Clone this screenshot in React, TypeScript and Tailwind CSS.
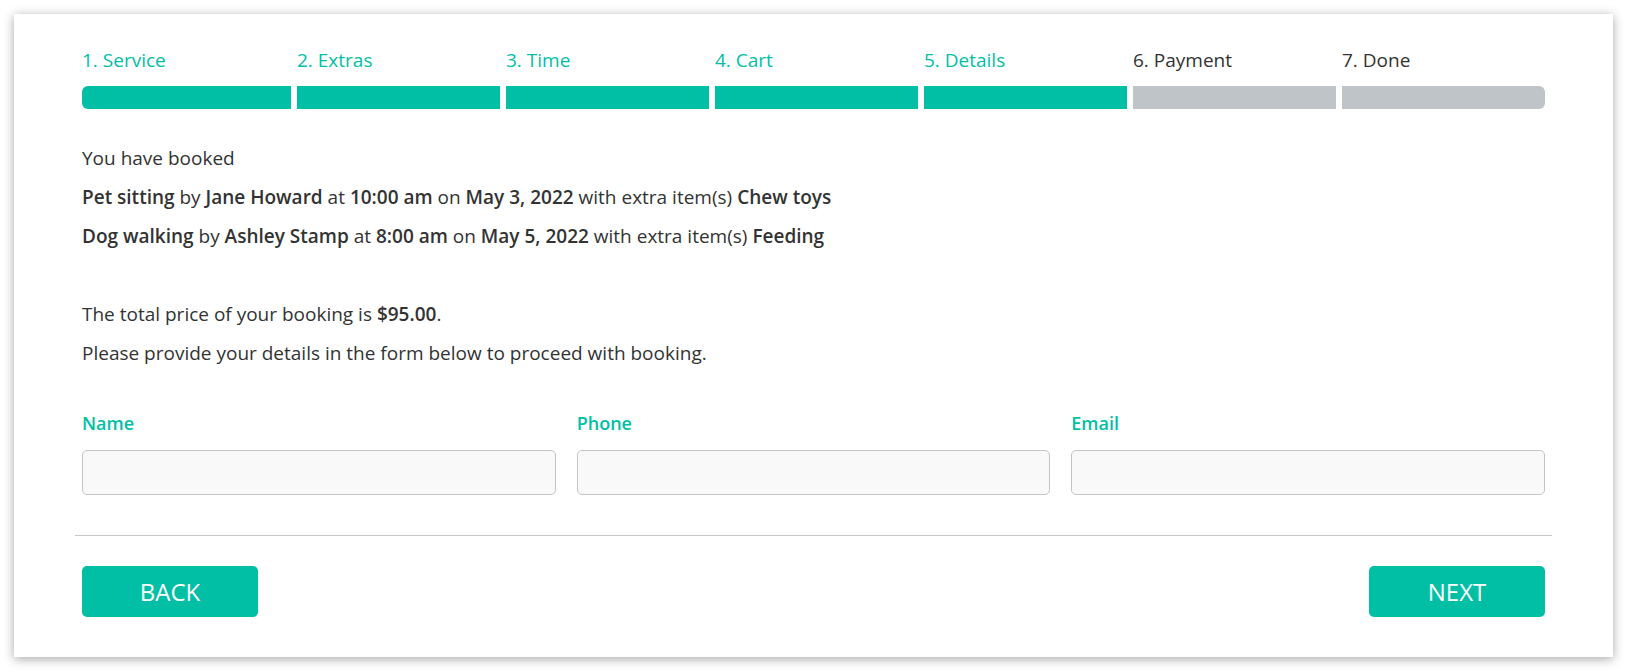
const steps = ["1. Service", "2. Extras", "3. Time", "4. Cart", "5. Details", "6. Payment", "7. Done"]
const doneCount = 5

function Field({ label }: { label: string }) {
  return (
    <div className="flex flex-col">
      <label className="text-[18px] leading-6 font-semibold text-[#00bfa5]">{label}</label>
      <input className="mt-[15px] h-[45px] rounded-[5px] border-[1.5px] border-[#c4c4c4] bg-[#f9f9f9] px-3 outline-none" />
    </div>
  )
}

export default function App() {
  return (
    <div className="min-h-[672px] bg-white p-[14px] pr-[15px] pb-[15px]" style={{ fontFamily: "'Open Sans', Lato, sans-serif" }}>
      <div className="h-[643px] bg-white shadow-[0_2px_10px_rgba(0,0,0,0.35)] pt-[34px] px-[68px] pb-[40px] text-[#333] text-[19px]">
        <div className="grid grid-cols-7">
          {steps.map((s, i) => (
            <div key={s} className={i > 0 ? "pl-[6px]" : ""}>
              <div className={`text-[19px] leading-6 ${i < doneCount ? "text-[#00bfa5]" : "text-[#333]"}`}>{s}</div>
              <div
                className={`mt-[14px] h-[23px] ${i < doneCount ? "bg-[#00bfa5]" : "bg-[#bfc4c8]"} ${i === 0 ? "rounded-l-[6px]" : ""} ${i === steps.length - 1 ? "rounded-r-[6px]" : ""}`}
              />
            </div>
          ))}
        </div>

        <div className="mt-[30px] leading-[39px]">
          <div>You have booked</div>
          <div>
            <b className="font-semibold">Pet sitting</b> by <b className="font-semibold">Jane Howard</b> at <b className="font-semibold">10:00 am</b> on <b className="font-semibold">May 3, 2022</b> with extra item(s) <b className="font-semibold">Chew toys</b>
          </div>
          <div>
            <b className="font-semibold">Dog walking</b> by <b className="font-semibold">Ashley Stamp</b> at <b className="font-semibold">8:00 am</b> on <b className="font-semibold">May 5, 2022</b> with extra item(s) <b className="font-semibold">Feeding</b>
          </div>
          <div className="mt-[39px]">
            The total price of your booking is <b className="font-semibold">$95.00</b>.
          </div>
          <div>Please provide your details in the form below to proceed with booking.</div>
        </div>

        <div className="mt-[38px] grid grid-cols-3 gap-x-[21px]">
          <Field label="Name" />
          <Field label="Phone" />
          <Field label="Email" />
        </div>

        <div className="mt-[40px] -mx-[7px] border-t-[1.5px] border-[#c8c8c8]" />

        <div className="mt-[30px] flex justify-between">
          <button className="h-[51px] w-[176px] rounded-[5px] bg-[#00bfa5] text-[24px] text-white">BACK</button>
          <button className="h-[51px] w-[176px] rounded-[5px] bg-[#00bfa5] text-[24px] text-white">NEXT</button>
        </div>
      </div>
    </div>
  )
}
